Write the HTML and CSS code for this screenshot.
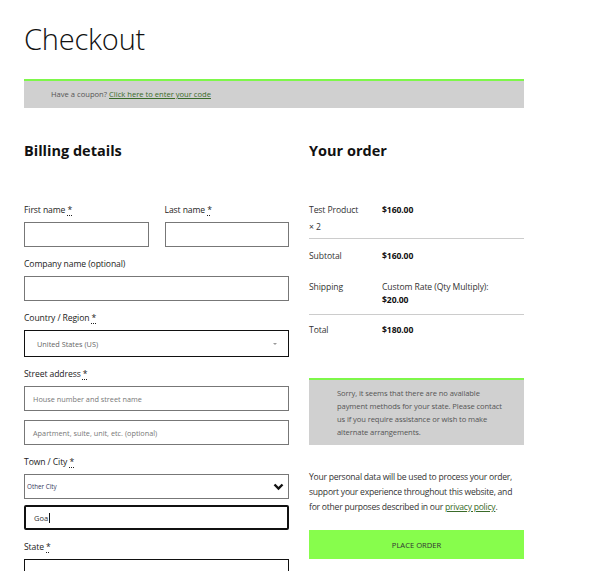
FILE: index.html
```html
<!DOCTYPE html>
<html lang="en">
<head>
<meta charset="utf-8">
<title>Checkout</title>
<link rel="stylesheet" href="styles.css">
</head>
<body>
<main class="page">
  <h1 class="title">Checkout</h1>
  <div class="coupon">Have a coupon? <a href="#">Click here to enter your code</a></div>

  <div class="columns">
    <section class="billing">
      <h3 class="heading">Billing details</h3>
      <div class="row-2">
        <div class="field">
          <label class="label">First name <abbr class="req">*</abbr></label>
          <div class="input"></div>
        </div>
        <div class="field">
          <label class="label">Last name <abbr class="req">*</abbr></label>
          <div class="input"></div>
        </div>
      </div>
      <div class="field">
        <label class="label">Company name (optional)</label>
        <div class="input"></div>
      </div>
      <div class="field">
        <label class="label">Country / Region <abbr class="req">*</abbr></label>
        <div class="input select-dark"><span class="sel-text">United States (US)</span><span class="tri"></span></div>
      </div>
      <div class="field">
        <label class="label">Street address <abbr class="req">*</abbr></label>
        <div class="input addr"><span class="ph">House number and street name</span></div>
        <div class="input addr second"><span class="ph">Apartment, suite, unit, etc. (optional)</span></div>
      </div>
      <div class="field">
        <label class="label">Town / City <abbr class="req">*</abbr></label>
        <div class="input city"><span class="city-text">Other City</span>
          <svg class="chev" width="11" height="8" viewBox="0 0 11 8"><polyline points="1.5,1.5 5.5,5.5 9.5,1.5" fill="none" stroke="#111" stroke-width="2.4"/></svg>
        </div>
        <div class="input goa"><span class="goa-text">Goa</span><span class="caret"></span></div>
      </div>
      <div class="field">
        <label class="label">State <abbr class="req">*</abbr></label>
        <div class="input state"></div>
      </div>
    </section>

    <section class="order">
      <h3 class="heading">Your order</h3>
      <div class="o-row first">
        <div class="o-name">Test Product<br>× 2</div>
        <div class="o-val"><strong>$160.00</strong></div>
      </div>
      <div class="o-row sub">
        <div class="o-name">Subtotal</div>
        <div class="o-val"><strong>$160.00</strong></div>
      </div>
      <div class="o-row ship">
        <div class="o-name">Shipping</div>
        <div class="o-val">Custom Rate (Qty Multiply):<br><strong>$20.00</strong></div>
      </div>
      <div class="o-row total">
        <div class="o-name">Total</div>
        <div class="o-val"><strong>$180.00</strong></div>
      </div>

      <div class="notice">Sorry, it seems that there are no available payment methods for your state. Please contact us if you require assistance or wish to make alternate arrangements.</div>

      <p class="privacy">Your personal data will be used to process your order, support your experience throughout this website, and<br>for other purposes described in our <a href="#">privacy policy</a>.</p>

      <button class="place">PLACE ORDER</button>
    </section>
  </div>
</main>
</body>
</html>
```
FILE: styles.css
```css
* { box-sizing: border-box; }
html, body { margin: 0; padding: 0; background: #fff; overflow: hidden; }
body {
  font-family: "Open Sans", "Noto Sans", sans-serif;
  color: #222;
}
.page { width: 601px; padding: 0 0 0 24px; }

.title {
  font-size: 29px;
  font-weight: 300;
  line-height: 36px;
  margin: 21px 0 0;
  color: #111;
  letter-spacing: -0.2px;
}

.coupon {
  width: 500px;
  height: 29px;
  margin-top: 22px;
  background: #d0d0d0;
  border-top: 2px solid #7ef74a;
  padding-left: 27px;
  font-size: 7.6px;
  line-height: 27px;
  color: #555;
}
.coupon a { color: #3a6b2a; text-decoration: underline; }

.columns { display: flex; gap: 20px; margin-top: 33px; }
.billing { width: 265px; }
.order { width: 215px; }

.heading {
  font-size: 14.5px;
  font-weight: 700;
  line-height: 20px;
  margin: 0;
  color: #111;
}

.billing .heading { margin-bottom: 42px; }

.row-2 { display: flex; gap: 16px; }
.row-2 .field { flex: 1; }

.field { margin-bottom: 10px; }
.label {
  display: block;
  font-size: 8.6px;
  line-height: 14px;
  color: #222;
  margin-bottom: 5px;
  letter-spacing: -0.1px;
}
.req { text-decoration: underline dotted; text-underline-offset: 2px; border: 0; }

.input {
  height: 25px;
  border: 1px solid #777;
  display: flex;
  align-items: center;
  position: relative;
}
.select-dark { height: 27px; border-color: #111; padding-left: 12px; }
.sel-text { font-size: 7.3px; color: #666; }
.tri {
  position: absolute;
  right: 11px;
  top: 12px;
  border-left: 2px solid transparent;
  border-right: 2px solid transparent;
  border-top: 2px solid #999;
}
.addr { height: 25px; padding-left: 8px; }
.addr.second { margin-top: 9px; }
.ph { font-size: 7.3px; color: #777; }

.city { height: 25px; padding-left: 2px; }
.city-text { font-size: 6.3px; color: #34385a; }
.chev { position: absolute; right: 4px; top: 8px; }

.goa {
  margin-top: 6px;
  border: 2px solid #111;
  border-radius: 2px;
  padding-left: 8px;
}
.goa-text { font-size: 7.5px; color: #333; }
.caret { width: 1px; height: 10px; background: #111; margin-left: 1px; }

.state { border-color: #111; height: 30px; }

.order .heading { margin-bottom: 41px; }
.o-row {
  display: grid;
  grid-template-columns: 73px 1fr;
  font-size: 8.6px;
  color: #333;
  letter-spacing: -0.1px;
}
.o-row strong { color: #111; font-weight: 700; }
.o-row.first { line-height: 17px; padding-bottom: 2px; border-bottom: 1px solid #ccc; }
.o-row.sub { line-height: 17px; padding-top: 9px; padding-bottom: 13px; }
.o-row.ship { line-height: 13px; padding-top: 3px; padding-bottom: 7px; border-bottom: 1px solid #ccc; }
.o-row.total { line-height: 17px; padding-top: 7px; }

.notice {
  margin-top: 39px;
  background: #d0d0d0;
  border-top: 2px solid #7ef74a;
  padding: 6.5px 15px 6.5px 28px;
  font-size: 7.6px;
  line-height: 13px;
  color: #555;
  letter-spacing: -0.1px;
}

.privacy {
  margin: 25px 0 0;
  font-size: 8.6px;
  line-height: 15px;
  color: #333;
  letter-spacing: -0.25px;
}
.privacy a { color: #3a6b2a; text-decoration: underline; }

.place {
  display: block;
  width: 215px;
  height: 29px;
  margin-top: 15px;
  background: #87fd4c;
  border: 0;
  font-family: inherit;
  font-size: 7.6px;
  color: #333;
  padding: 0;
}
```
